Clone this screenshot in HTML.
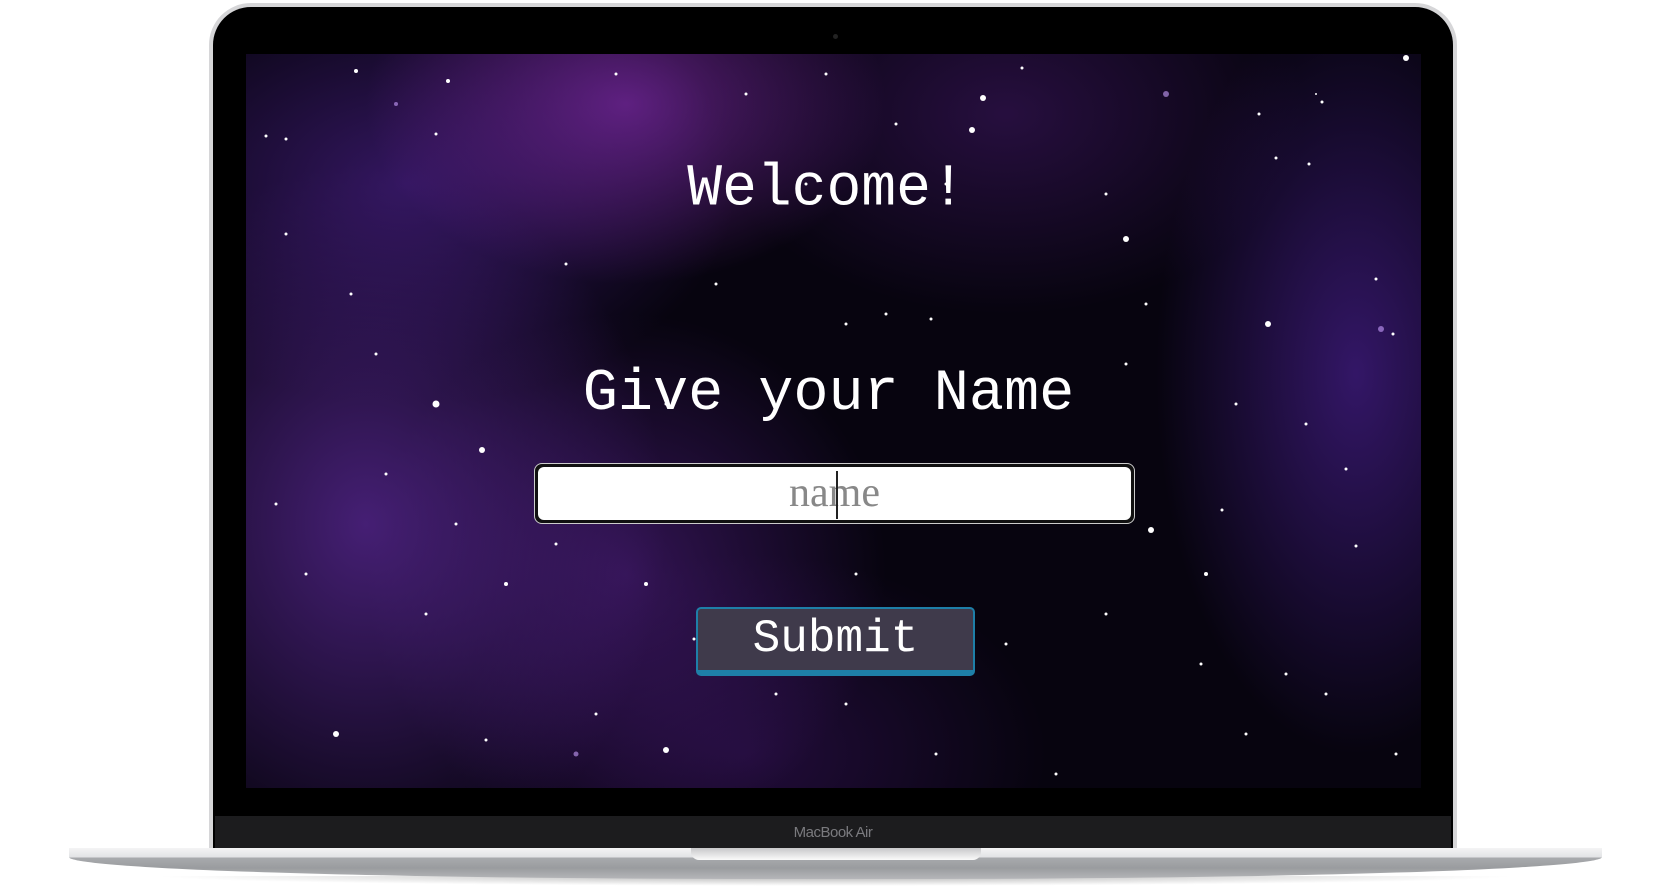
<!DOCTYPE html>
<html><head><meta charset="utf-8"><style>
html,body{margin:0;padding:0;width:1666px;height:895px;background:#fff;overflow:hidden;position:relative}
.lid{position:absolute;left:209px;top:3px;width:1248px;height:852px;border-radius:42px 42px 0 0;background:#d6d6d8;}
.lid2{position:absolute;left:213px;top:7px;width:1240px;height:848px;border-radius:38px 38px 0 0;background:#000;}
.chin{position:absolute;left:215px;top:816px;width:1236px;height:32px;background:#1c1c1e;}
.mba{position:absolute;left:0;width:1666px;top:824px;text-align:center;color:#7a7a7e;font:15px "Liberation Sans",sans-serif;letter-spacing:-0.5px}
.screen{position:absolute;left:246px;top:54px;width:1175px;height:734px;overflow:hidden;
background:
radial-gradient(ellipse 260px 180px at 380px 50px,rgba(120,40,160,.75),transparent),
radial-gradient(ellipse 330px 220px at 160px 130px,rgba(70,30,130,.7),transparent),
radial-gradient(ellipse 300px 360px at 120px 470px,rgba(90,40,150,.75),transparent),
radial-gradient(ellipse 260px 260px at 380px 520px,rgba(80,30,130,.6),transparent),
radial-gradient(ellipse 200px 380px at 1110px 320px,rgba(70,30,140,.7),transparent),
radial-gradient(ellipse 300px 200px at 760px 60px,rgba(70,25,110,.5),transparent),
radial-gradient(ellipse 300px 200px at 500px 700px,rgba(60,20,100,.5),transparent),
#07040f;}
.t{position:absolute;left:-7px;width:100%;text-align:center;color:#fff;font-family:"Liberation Mono",monospace;}
.inp{position:absolute;left:534px;top:463px;width:601px;height:61px;box-sizing:border-box;border-radius:8px;border:1px solid #ccc;background:#111;}
.inp2{position:absolute;left:3px;top:3px;right:3px;bottom:3px;background:#fff;border-radius:6px;text-align:center;color:#888;font:42px "Liberation Serif",serif;line-height:52px}
.caret{position:absolute;left:298px;top:4px;width:1.5px;height:48px;background:#222}
.btn{position:absolute;left:696px;top:607px;width:279px;height:69px;box-sizing:border-box;border:2px solid #1e7fa8;border-bottom:6px solid #1e7fa8;border-radius:5px;background:#3f3a4b;color:#fff;text-align:center;font:46px "Liberation Mono",monospace;line-height:60px}
.base{position:absolute;left:69px;top:848px;width:1533px;height:31px;background:linear-gradient(#f4f4f5 0,#e2e3e5 9px,#a8aaad 10px,#9a9c9f 20px,#b5b6b9 31px);border-radius:0 0 700px 700px/0 0 22px 22px;}
.notch{position:absolute;left:691px;top:848px;width:290px;height:12px;background:linear-gradient(#c8c8ca,#fafafa);border-radius:0 0 8px 8px}
.shadow{position:absolute;left:150px;top:876px;width:1370px;height:10px;background:radial-gradient(ellipse at center top,rgba(0,0,0,.3),transparent 70%)}
</style></head><body>
<div class="shadow"></div>
<div class="lid"></div><div class="lid2"></div>
<div style="position:absolute;left:833px;top:34px;width:5px;height:5px;border-radius:50%;background:#222"></div>
<div class="screen">
<svg width="1175" height="734" style="position:absolute;left:0;top:0">
<g fill="#fff">
<circle cx="110" cy="17" r="2"/><circle cx="202" cy="27" r="2"/><circle cx="737" cy="44" r="3"/><circle cx="726" cy="76" r="3"/><circle cx="776" cy="14" r="1.5"/><circle cx="650" cy="70" r="1.5"/><circle cx="1160" cy="4" r="3"/><circle cx="20" cy="82" r="1.5"/><circle cx="40" cy="85" r="1.5"/><circle cx="190" cy="80" r="1.5"/><circle cx="880" cy="185" r="3"/><circle cx="860" cy="140" r="1.5"/><circle cx="1063" cy="110" r="1.5"/><circle cx="1250" cy="170" r="2"/><circle cx="1013" cy="60" r="1.5"/><circle cx="1076" cy="48" r="1.5"/><circle cx="1022" cy="270" r="3"/><circle cx="1030" cy="104" r="1.5"/><circle cx="1130" cy="225" r="1.5"/><circle cx="190" cy="350" r="3.5"/><circle cx="236" cy="396" r="3"/><circle cx="40" cy="180" r="1.5"/><circle cx="105" cy="240" r="1.5"/><circle cx="320" cy="210" r="1.5"/><circle cx="370" cy="20" r="1.5"/><circle cx="600" cy="270" r="1.5"/><circle cx="640" cy="260" r="1.5"/><circle cx="685" cy="265" r="1.5"/><circle cx="880" cy="310" r="1.5"/><circle cx="1147" cy="280" r="1.5"/><circle cx="1070" cy="40" r="1"/><circle cx="1100" cy="415" r="1.5"/><circle cx="1180" cy="520" r="1.5"/><circle cx="1110" cy="492" r="1.5"/><circle cx="905" cy="476" r="3"/><circle cx="976" cy="456" r="1.5"/><circle cx="836" cy="468" r="1.5"/><circle cx="955" cy="610" r="1.5"/><circle cx="1000" cy="680" r="1.5"/><circle cx="1040" cy="620" r="1.5"/><circle cx="90" cy="680" r="3"/><circle cx="420" cy="696" r="3"/><circle cx="350" cy="660" r="1.5"/><circle cx="240" cy="686" r="1.5"/><circle cx="180" cy="560" r="1.5"/><circle cx="60" cy="520" r="1.5"/><circle cx="400" cy="530" r="2"/><circle cx="448" cy="585" r="1.5"/><circle cx="530" cy="640" r="1.5"/><circle cx="600" cy="650" r="1.5"/><circle cx="610" cy="520" r="1.5"/><circle cx="760" cy="590" r="1.5"/><circle cx="860" cy="560" r="1.5"/><circle cx="1080" cy="640" r="1.5"/><circle cx="30" cy="450" r="1.5"/><circle cx="140" cy="420" r="1.5"/><circle cx="310" cy="490" r="1.5"/><circle cx="260" cy="530" r="2"/><circle cx="210" cy="470" r="1.5"/><circle cx="130" cy="300" r="1.5"/><circle cx="420" cy="350" r="1.5"/><circle cx="470" cy="230" r="1.5"/><circle cx="560" cy="130" r="1.5"/><circle cx="700" cy="130" r="1.5"/><circle cx="900" cy="250" r="1.5"/><circle cx="990" cy="350" r="1.5"/><circle cx="1060" cy="370" r="1.5"/><circle cx="960" cy="520" r="2"/><circle cx="690" cy="700" r="1.5"/><circle cx="810" cy="720" r="1.5"/><circle cx="1150" cy="700" r="1.5"/><circle cx="500" cy="40" r="1.5"/><circle cx="580" cy="20" r="1.5"/>
</g>
<g fill="#c9a0ff" opacity=".6"><circle cx="1135" cy="275" r="3"/><circle cx="300" cy="430" r="3"/><circle cx="575" cy="560" r="3"/><circle cx="330" cy="700" r="2.5"/><circle cx="150" cy="50" r="2"/><circle cx="920" cy="40" r="3"/></g>
</svg>
<div class="t" style="top:101px;font-size:58px;line-height:70px;transform:scaleY(1.03)">Welcome!</div>
<div class="t" style="top:305px;font-size:58.5px;line-height:70px;left:-5px">Give your Name</div>
</div>
<div class="inp"><div class="inp2">name<div class="caret"></div></div></div>
<div class="btn">Submit</div>
<div class="chin"></div>
<div class="mba">MacBook Air</div>
<div class="base"></div>
<div class="notch"></div>
</body></html>
